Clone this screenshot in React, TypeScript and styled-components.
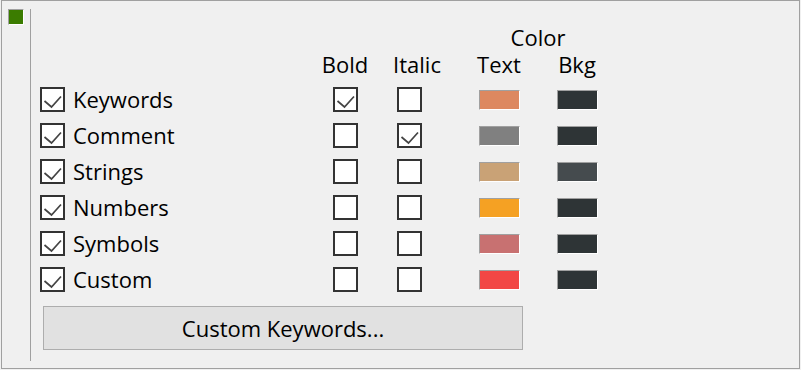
import React from 'react';
import styled, { createGlobalStyle } from 'styled-components';

const GlobalStyle = createGlobalStyle`
  html, body {
    margin: 0;
    padding: 0;
    background: #f0f0f0;
  }
  body {
    font-family: 'Open Sans', 'Noto Sans', sans-serif;
    color: #000;
  }
`;

const Frame = styled.div`
  box-sizing: border-box;
  width: 799px;
  height: 369px;
  margin-left: 1px;
  border: 1px solid #a0a0a0;
  background: #f0f0f0;
  display: flex;
  align-items: flex-start;
  padding: 8px 0 0 6px;
`;

const Indicator = styled.div`
  box-sizing: border-box;
  width: 16px;
  height: 16px;
  background: #3b7c00;
  border-top: 1px solid #a0a0a0;
  border-left: 1px solid #a0a0a0;
  border-right: 1px solid #fff;
  border-bottom: 1px solid #fff;
  flex-shrink: 0;
`;

const Separator = styled.div`
  width: 1px;
  height: 352px;
  background: #a0a0a0;
  margin-left: 6px;
  flex-shrink: 0;
`;

const Content = styled.div`
  padding: 15px 0 0 9px;
  display: flex;
  flex-direction: column;
`;

const Table = styled.div`
  display: grid;
  grid-template-columns: 273px 64px 64px 19px 78px 78px;
  grid-template-rows: 27px 30px;
  grid-auto-rows: 36px;
  font-size: 22px;
`;

const Header = styled.div<{ $col: string; $row: number; $shift?: number }>`
  grid-column: ${(p) => p.$col};
  grid-row: ${(p) => p.$row};
  line-height: 27px;
  height: 27px;
  text-align: center;
  padding-left: ${(p) => (p.$shift ? p.$shift * 2 : 0)}px;
  white-space: nowrap;
`;

const Cell = styled.div<{ $col: number; $row: number; $center?: boolean }>`
  grid-column: ${(p) => p.$col};
  grid-row: ${(p) => p.$row};
  display: flex;
  align-items: center;
  justify-content: ${(p) => (p.$center ? 'center' : 'flex-start')};
`;

const Box = styled.span`
  box-sizing: border-box;
  width: 25px;
  height: 25px;
  border: 2px solid #333;
  background: #fff;
  display: inline-flex;
  flex-shrink: 0;
`;

const Label = styled.span`
  margin-left: 8px;
  font-size: 22px;
  line-height: 30px;
  white-space: nowrap;
`;

const Swatch = styled.span<{ $color: string }>`
  box-sizing: border-box;
  width: 41px;
  height: 20px;
  background: ${(p) => p.$color};
  border-top: 1px solid #a0a0a0;
  border-left: 1px solid #a0a0a0;
  border-right: 1px solid #fff;
  border-bottom: 1px solid #fff;
  margin-top: 1px;
`;

const Button = styled.button`
  box-sizing: border-box;
  width: 480px;
  height: 44px;
  margin: 9px 0 0 3px;
  background: #e1e1e1;
  border: 1px solid #adadad;
  font-family: 'Open Sans', 'Noto Sans', sans-serif;
  font-size: 22px;
  color: #000;
  padding: 0;
  cursor: default;
`;

const Check = ({ checked }: { checked: boolean }) => (
  <Box>
    {checked ? (
      <svg width="21" height="21" viewBox="0 0 21 21">
        <polyline
          points="2.5,12 9.5,18 19,7.5"
          fill="none"
          stroke="#444"
          strokeWidth="1.7"
        />
      </svg>
    ) : null}
  </Box>
);

const rows = [
  { name: 'Keywords', bold: true, italic: false, text: '#dd8860', bkg: '#2e3436' },
  { name: 'Comment', bold: false, italic: true, text: '#808080', bkg: '#2e3436' },
  { name: 'Strings', bold: false, italic: false, text: '#c9a276', bkg: '#454b4e' },
  { name: 'Numbers', bold: false, italic: false, text: '#f5a123', bkg: '#2e3436' },
  { name: 'Symbols', bold: false, italic: false, text: '#c87171', bkg: '#2e3436' },
  { name: 'Custom', bold: false, italic: false, text: '#f24745', bkg: '#2e3436' },
];

const App = () => {
  return (
    <>
      <GlobalStyle />
      <Frame>
        <Indicator />
        <Separator />
        <Content>
          <Table>
            <Header $col="5 / 7" $row={1}>Color</Header>
            <Header $col="2" $row={2}>Bold</Header>
            <Header $col="3" $row={2} $shift={8}>Italic</Header>
            <Header $col="5" $row={2}>Text</Header>
            <Header $col="6" $row={2}>Bkg</Header>
            {rows.map((r, i) => (
              <React.Fragment key={r.name}>
                <Cell $col={1} $row={i + 3}>
                  <Check checked />
                  <Label>{r.name}</Label>
                </Cell>
                <Cell $col={2} $row={i + 3} $center>
                  <Check checked={r.bold} />
                </Cell>
                <Cell $col={3} $row={i + 3} $center>
                  <Check checked={r.italic} />
                </Cell>
                <Cell $col={5} $row={i + 3} $center>
                  <Swatch $color={r.text} />
                </Cell>
                <Cell $col={6} $row={i + 3} $center>
                  <Swatch $color={r.bkg} />
                </Cell>
              </React.Fragment>
            ))}
          </Table>
          <Button>Custom Keywords...</Button>
        </Content>
      </Frame>
    </>
  );
};

export default App;
